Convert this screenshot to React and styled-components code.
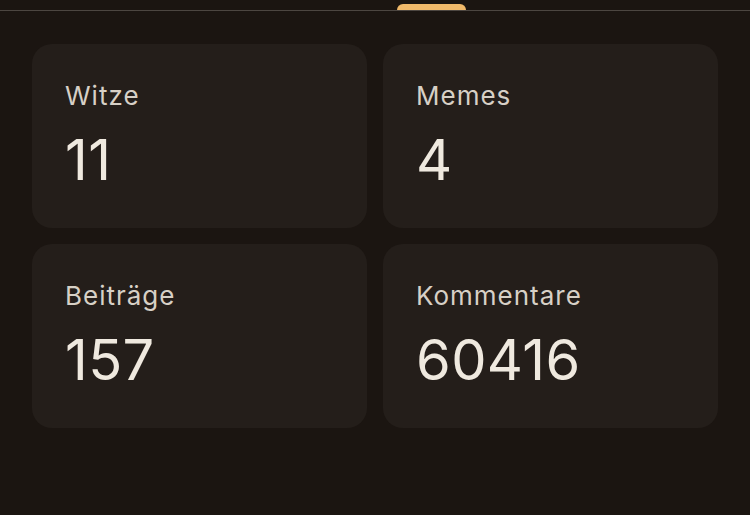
import styled, { createGlobalStyle } from "styled-components";

const Global = createGlobalStyle`
    html, body {
        margin: 0;
        padding: 0;
        background: #1b1511;
        font-family: Inter, "Noto Sans", sans-serif;
    }
`

const Page = styled.div`
    width: 750px;
    height: 515px;
    background: #1b1511;
    display: flex;
    flex-direction: column;
    overflow: hidden;
`

const TopBar = styled.div`
    height: 10px;
    border-bottom: 1px solid #4c4641;
    display: flex;
    justify-content: center;
    align-items: flex-end;
`

const Tab = styled.div`
    width: 69px;
    height: 6px;
    margin-left: 113px;
    background: #f0b96a;
    border-radius: 6px 6px 0 0;
`

const Grid = styled.div`
    display: grid;
    grid-template-columns: 335px 335px;
    grid-auto-rows: 184px;
    gap: 16px;
    padding: 33px 32px 0;
`

const Card = styled.div`
    background: #241e1a;
    border-radius: 20px;
    padding: 34px 33px 0;
    display: flex;
    flex-direction: column;
`

const Label = styled.div`
    font-size: 26px;
    line-height: 36px;
    letter-spacing: 1px;
    color: #d7d0c6;
`

const Value = styled.div`
    font-size: 56px;
    line-height: 64px;
    letter-spacing: 0.4px;
    margin-top: 14px;
    color: #efe9df;
`

const stats = [
    { label: "Witze", value: 11 },
    { label: "Memes", value: 4 },
    { label: "Beiträge", value: 157 },
    { label: "Kommentare", value: 60416 },
]

export default function App() {
    return (
        <Page>
            <Global />
            <TopBar>
                <Tab />
            </TopBar>
            <Grid>
                {stats.map((s) => (
                    <Card key={s.label}>
                        <Label>{s.label}</Label>
                        <Value>{s.value}</Value>
                    </Card>
                ))}
            </Grid>
        </Page>
    )
}
